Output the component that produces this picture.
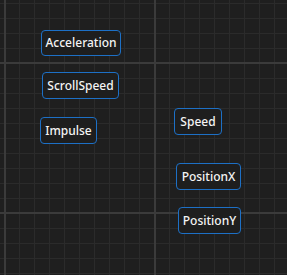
import React from "react";

const node =
  "absolute flex items-center justify-center rounded-[4px] border border-[#1d70c6] bg-[#1e1e1e] text-[12px] font-medium leading-none text-[#f4f4f4]";

const App: React.FC = () => {
  return (
    <div className="relative w-[287px] h-[275px] overflow-hidden bg-[#1f1f1f] bg-[image:linear-gradient(to_right,#3b3b3b_2px,transparent_2px),linear-gradient(to_bottom,#3b3b3b_2px,transparent_2px),linear-gradient(to_right,#2b2b2b_1px,transparent_1px),linear-gradient(to_bottom,#2b2b2b_1px,transparent_1px)] bg-[length:150px_150px,150px_150px,15px_15px,15px_15px] bg-[position:4px_62px,4px_62px,4px_3px,4px_3px] font-['Segoe_UI','Noto_Sans',sans-serif]">
      {/* graph nodes, placed on the free canvas */}
      <div className={`${node} left-[41px] top-[30px] w-[80px] h-[26px]`}>Acceleration</div>
      <div className={`${node} left-[42px] top-[72px] w-[77px] h-[27px]`}>ScrollSpeed</div>
      <div className={`${node} left-[40px] top-[117px] w-[57px] h-[27px]`}>Impulse</div>
      <div className={`${node} left-[174px] top-[108px] w-[48px] h-[27px]`}>Speed</div>
      <div className={`${node} left-[176px] top-[163px] w-[65px] h-[27px]`}>PositionX</div>
      <div className={`${node} left-[178px] top-[207px] w-[63px] h-[27px]`}>PositionY</div>
    </div>
  );
};

export default App;
